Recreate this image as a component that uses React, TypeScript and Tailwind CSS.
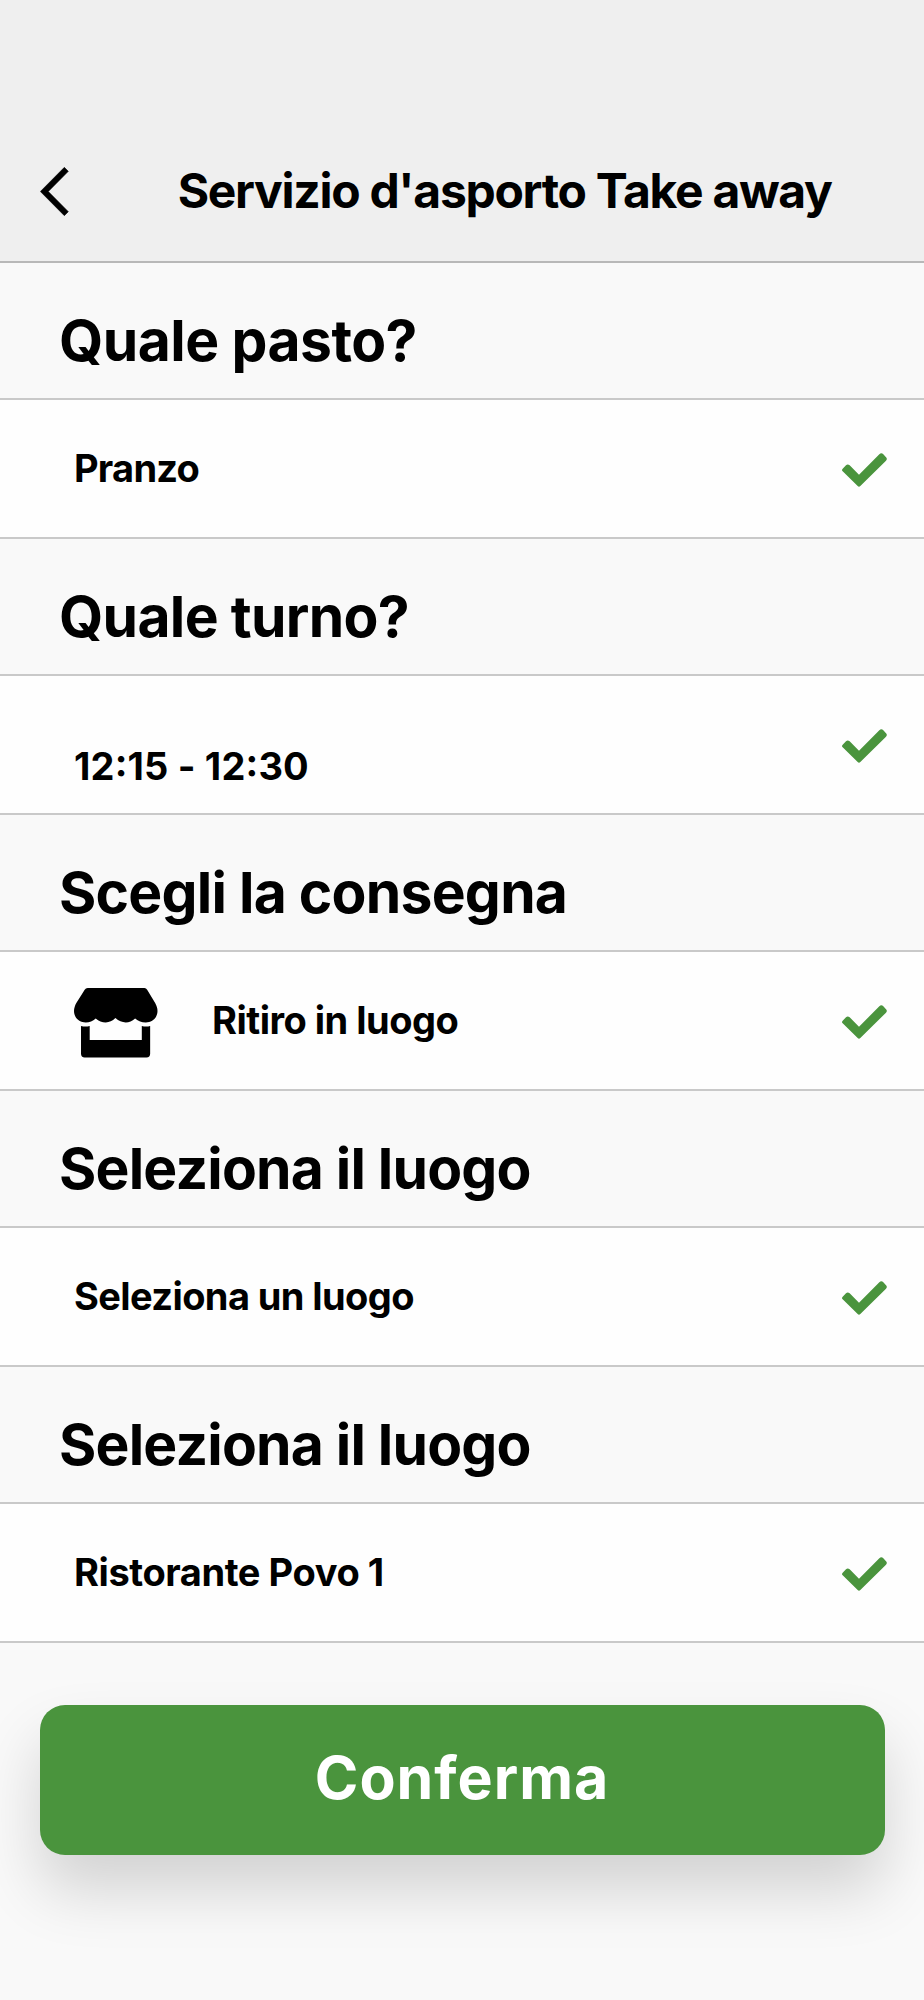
import type { ReactNode } from 'react';

function BackIcon() {
  return (
    <svg viewBox="119 111 86 147" className="h-[49px] w-[28.7px]" fill="#000" stroke="#000" strokeWidth="1.5" aria-hidden="true">
      <path d="M120 184.500 192 112l12 12-60 60.500 60 60.500-12 12z" />
    </svg>
  );
}

function CheckIcon() {
  return (
    <svg viewBox="127 158 135 102" className="h-[34px] w-[45px]" fill="#4a943d" aria-hidden="true">
      <path d="M129 205 139 195Q144 190 150 195L178 223 239 162Q245 156 251 162L259 171Q264 176 259 181L182 257Q178 261 174 257L129 213Q125 209 129 205Z" />
    </svg>
  );
}

function StoreIcon() {
  return (
    <svg viewBox="72 84 250 208" className="h-[69.5px] w-[83.5px]" fill="#000" aria-hidden="true">
      <path d="M113 84H283Q288 84 291 89L315 129C320 138 322 145 322 153C322 173 306 187 287 187C274 187 265 183 255 175C246 183 237 187 227 187C216 187 206 183 196 174C187 183 178 187 167 187C156 187 146 183 137 175C128 183 119 187 107 187C88 187 72 173 72 153C72 145 75 136 79 129L104 89Q107 84 113 84Z" />
      <path d="M93 198Q106 201 119 198V240H275V198Q288 201 300 198V281Q300 292 289 292H104Q93 292 93 281Z" />
    </svg>
  );
}

function Colon() {
  return <span className="[font-feature-settings:'case'_1]">:</span>;
}

function Section({ title, titleClass, children }: { title: string; titleClass: string; children: ReactNode }) {
  return (
    <section>
      <h2 className={`flex h-[135px] items-center pt-5 pl-[59px] text-[57px] leading-none font-bold ${titleClass}`}>
        {title}
      </h2>
      <div className="flex h-[141px] items-center justify-between border-y-2 border-[#c9c9c9] bg-[#fefefe] pr-[37px] pl-[74px] text-[38px] leading-none font-bold">
        {children}
        <div className="pt-[3px]">
          <CheckIcon />
        </div>
      </div>
    </section>
  );
}

export default function App() {
  return (
    <main className="flex h-[2000px] w-[924px] flex-col overflow-hidden bg-[#f9f9f9] font-['Inter',sans-serif] whitespace-nowrap text-black">
      <header className="flex h-[263px] shrink-0 items-center border-b-2 border-[#b8b8b8] bg-[#efefef] pt-[121px] pl-10">
        <button aria-label="Indietro">
          <BackIcon />
        </button>
        <h1 className="ml-[109px] text-[48px] leading-none font-bold tracking-[-1.3px]">
          Servizio d'asporto Take away
        </h1>
      </header>

      <Section title="Quale pasto?" titleClass="tracking-[-0.54px]">
        <span className="pb-[2px] tracking-[-0.75px]">Pranzo</span>
      </Section>
      <Section title="Quale turno?" titleClass="tracking-[-0.67px]">
        <span className="pt-[42px] tracking-[0.17px]">
          12<Colon />15 - 12<Colon />30
        </span>
      </Section>
      <Section title="Scegli la consegna" titleClass="tracking-[-0.75px]">
        <div className="flex flex-1 items-center gap-[54.5px]">
          <div className="pt-[5px]">
            <StoreIcon />
          </div>
          <span className="pb-[2px] tracking-[-0.5px]">Ritiro in luogo</span>
        </div>
      </Section>
      <Section title="Seleziona il luogo" titleClass="tracking-[-0.79px]">
        <span className="pb-[2px] tracking-[-0.6px]">Seleziona un luogo</span>
      </Section>
      <Section title="Seleziona il luogo" titleClass="tracking-[-0.79px]">
        <span className="pb-[2px] tracking-[-0.42px]">Ristorante Povo 1</span>
      </Section>

      <button className="mx-[39.5px] mt-[62px] flex h-[150px] shrink-0 items-center justify-center rounded-[25px] bg-[#4a943d] pb-[5px] text-[59px] leading-none font-bold tracking-[1px] text-white shadow-[0_35px_62px_rgba(0,0,0,0.155)]">
        Conferma
      </button>
    </main>
  );
}
